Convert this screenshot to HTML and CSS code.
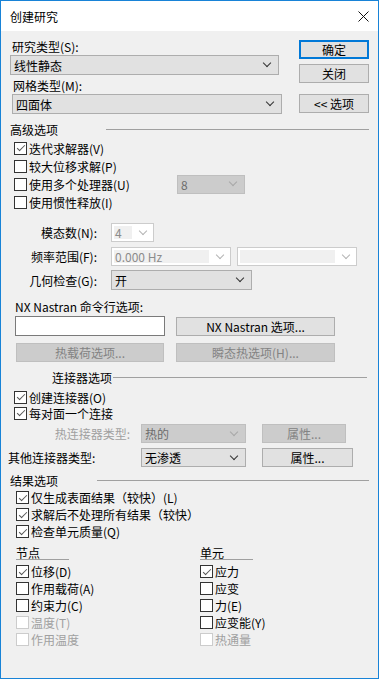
FILE: index.html
```html
<!DOCTYPE html>
<html lang="zh-CN">
<head>
    <meta charset="UTF-8">
    <meta name="viewport" content="width=device-width, initial-scale=1.0">
    <title>创建研究</title>
    <link rel="stylesheet" href="styles.css">
</head>
<body>
<div class="window">
    <div class="titlebar">
        <span class="title">创建研究</span>
        <svg class="close" width="11" height="11" viewBox="0 0 11 11">
            <path d="M0.5 0.5 L10.5 10.5 M10.5 0.5 L0.5 10.5" stroke="#111" stroke-width="1" fill="none"/>
        </svg>
    </div>

    <!-- study type / mesh type + dialog buttons -->
    <div class="top">
        <div class="top-left">
            <div class="label lbl-study">研究类型(S):</div>
            <div class="combo combo-study"><span>线性静态</span></div>
            <div class="label lbl-mesh">网格类型(M):</div>
            <div class="combo combo-mesh"><span>四面体</span></div>
        </div>
        <div class="top-buttons">
            <div class="btn btn-default">确定</div>
            <div class="btn btn-close">关闭</div>
            <div class="btn btn-options">&lt;&lt; 选项</div>
        </div>
    </div>

    <!-- advanced options -->
    <div class="group-head head-adv">
        <span class="caption">高级选项</span>
        <span class="rule"></span>
    </div>
    <div class="checks checks-adv">
        <div class="check"><span class="box on"></span>迭代求解器(V)</div>
        <div class="check"><span class="box"></span>较大位移求解(P)</div>
        <div class="check">
            <span class="box"></span><span class="proc-text">使用多个处理器(U)</span>
            <div class="combo dis combo-proc"><span>8</span></div>
        </div>
        <div class="check"><span class="box"></span>使用惯性释放(I)</div>
    </div>

    <div class="fields">
        <div class="field">
            <span class="field-label">模态数(N):</span>
            <div class="combo edit combo-modes"><span>4</span></div>
        </div>
        <div class="field field-freq">
            <span class="field-label">频率范围(F):</span>
            <div class="combo edit combo-freq"><span>0.000 Hz</span></div>
            <div class="combo edit combo-freq combo-freq2"><span></span></div>
        </div>
        <div class="field field-geo">
            <span class="field-label">几何检查(G):</span>
            <div class="combo combo-geo"><span>开</span></div>
        </div>
    </div>

    <!-- NX Nastran -->
    <div class="nx">
        <div class="label">NX Nastran 命令行选项:</div>
        <div class="nx-row">
            <div class="textbox"></div>
            <div class="btn btn-nx">NX Nastran 选项...</div>
        </div>
        <div class="nx-row nx-row2">
            <div class="btn dis btn-heat">热载荷选项...</div>
            <div class="btn dis btn-nx">瞬态热选项(H)...</div>
        </div>
    </div>

    <!-- connectors -->
    <div class="group-head head-conn">
        <span class="caption">连接器选项</span>
        <span class="rule"></span>
    </div>
    <div class="checks checks-conn">
        <div class="check"><span class="box on"></span>创建连接器(O)</div>
        <div class="check"><span class="box on"></span>每对面一个连接</div>
    </div>
    <div class="conn-row conn-heat">
        <span class="conn-label dis-text">热连接器类型:</span>
        <div class="combo dis combo-conn"><span>热的</span></div>
        <div class="btn dis btn-prop-dis">属性...</div>
    </div>
    <div class="conn-row conn-other">
        <span class="conn-label">其他连接器类型:</span>
        <div class="combo combo-conn"><span>无渗透</span></div>
        <div class="btn btn-prop">属性...</div>
    </div>

    <!-- results -->
    <div class="group-head head-res">
        <span class="caption">结果选项</span>
        <span class="rule"></span>
    </div>
    <div class="checks checks-res">
        <div class="check"><span class="box on"></span>仅生成表面结果（较快）(L)</div>
        <div class="check"><span class="box on"></span>求解后不处理所有结果（较快）</div>
        <div class="check"><span class="box on"></span>检查单元质量(Q)</div>
    </div>

    <div class="cols">
        <div class="col col-node">
            <div class="col-head">节点</div>
            <div class="col-checks">
                <div class="check"><span class="box on"></span>位移(D)</div>
                <div class="check"><span class="box"></span>作用载荷(A)</div>
                <div class="check"><span class="box"></span>约束力(C)</div>
                <div class="check dis-text"><span class="box dis"></span>温度(T)</div>
                <div class="check dis-text"><span class="box dis"></span>作用温度</div>
            </div>
        </div>
        <div class="col">
            <div class="col-head">单元</div>
            <div class="col-checks">
                <div class="check"><span class="box on"></span>应力</div>
                <div class="check"><span class="box"></span>应变</div>
                <div class="check"><span class="box"></span>力(E)</div>
                <div class="check"><span class="box"></span>应变能(Y)</div>
                <div class="check dis-text"><span class="box dis"></span>热通量</div>
            </div>
        </div>
    </div>
</div>
</body>
</html>
```

FILE: styles.css
```css
* {
    box-sizing: border-box;
}
body {
    margin: 0;
    font-family: "Noto Sans CJK SC", "Noto Sans", sans-serif;
    font-size: 12px;
    color: #000;
}
.window {
    width: 379px;
    height: 679px;
    border: 1px solid #1883d7;
    background-color: #f0f0f0;
}
.titlebar {
    height: 30px;
    background-color: #fff;
    display: flex;
    align-items: center;
    justify-content: space-between;
    padding: 0 9px;
}
.label {
    height: 14px;
    line-height: 14px;
    white-space: nowrap;
}

/* combo boxes */
.combo {
    display: flex;
    align-items: center;
    height: 20px;
    background-color: #e1e1e1;
    border: 1px solid #adadad;
    padding-left: 3px;
    white-space: nowrap;
}
.combo span {
    flex: 1;
}
.combo::after {
    content: "";
    width: 5px;
    height: 5px;
    border-right: 1px solid #333;
    border-bottom: 1px solid #333;
    transform: translateY(-2px) rotate(45deg);
    margin-right: 8px;
}
.combo.dis {
    background-color: #cccccc;
    border-color: #bfbfbf;
    color: #6d6d6d;
    height: 19px;
}
.combo.dis::after {
    border-color: #a8a8a8;
}
.combo.edit {
    background-color: #fff;
    border-color: #cccccc;
    padding: 2px 0 2px 2px;
    color: #8c8c8c;
    height: 19px;
}
.combo.edit span {
    height: 100%;
    line-height: 13px;
    background-color: #f0f0f0;
    padding-left: 1px;
}
.combo.edit::after {
    border-color: #b4b4b4;
    margin: 0 7px 0 8px;
}

/* buttons */
.btn {
    height: 19px;
    display: flex;
    align-items: center;
    justify-content: center;
    background-color: #e1e1e1;
    border: 1px solid #adadad;
    white-space: nowrap;
}
.btn.dis {
    background-color: #cccccc;
    border-color: #bfbfbf;
    color: #838383;
}
.btn-default {
    border: 2px solid #0078d7;
}

.top {
    display: flex;
    justify-content: space-between;
    padding: 9px 9px 0 9px;
}
.top-left {
    width: 272px;
}
.lbl-study {
    padding-left: 2px;
}
.combo-study {
    margin-top: 1px;
    width: 269px;
}
.lbl-mesh {
    margin-top: 4px;
    padding-left: 3px;
}
.combo-mesh {
    margin-top: 1px;
    margin-left: 2px;
    width: 270px;
}
.top-buttons {
    width: 70px;
}
.btn-close {
    margin-top: 5px;
}
.btn-options {
    margin-top: 11px;
}

/* group headings */
.group-head {
    display: flex;
    align-items: center;
    height: 14px;
    white-space: nowrap;
}
.group-head .rule {
    flex: 1;
    border-top: 1px solid #a0a0a0;
}
.head-adv {
    margin-top: 8px;
    padding: 0 9px;
}
.head-adv .caption {
    width: 96px;
}
.head-conn {
    margin-top: 8px;
    padding: 0 11px 0 51px;
}
.head-conn .rule {
    margin-left: 1px;
}
.head-res {
    margin-top: 6px;
    padding: 0 9px;
}
.head-res .caption {
    width: 87px;
}

/* check boxes */
.checks {
    padding-left: 13px;
}
.check {
    display: flex;
    align-items: center;
    height: 18px;
    white-space: nowrap;
}
.box {
    flex: none;
    width: 13px;
    height: 13px;
    border: 1px solid #333;
    background-color: #fff;
    margin-right: 2px;
    display: flex;
    align-items: center;
    justify-content: center;
}
.box.on::after {
    content: "";
    width: 3px;
    height: 7px;
    border-right: 1px solid #555;
    border-bottom: 1px solid #555;
    transform: translateY(-1px) rotate(45deg);
}
.box.dis {
    border-color: #cccccc;
}
.dis-text {
    color: #a0a0a0;
}
.checks-adv {
    margin-top: 3px;
}
.proc-text {
    width: 148px;
}
.combo-proc {
    width: 68px;
}

/* mode / frequency / geometry fields */
.fields {
    margin-top: 12px;
}
.field {
    display: flex;
    align-items: center;
}
.field-label {
    width: 96px;
    margin-right: 14px;
    text-align: right;
    white-space: nowrap;
}
.combo-modes {
    width: 43px;
}
.field-freq {
    margin-top: 5px;
}
.combo-freq {
    width: 120px;
}
.combo-freq2 {
    margin-left: 6px;
}
.field-geo {
    margin-top: 4px;
}
.combo-geo {
    width: 141px;
}

/* nastran */
.nx {
    padding-left: 14px;
    margin-top: 10px;
}
.nx-row {
    display: flex;
    align-items: center;
    margin-top: 2px;
}
.textbox {
    width: 150px;
    height: 20px;
    background-color: #fff;
    border: 1px solid #7a7a7a;
}
.btn-nx {
    width: 159px;
    margin-left: 11px;
}
.nx-row2 {
    margin-top: 7px;
}
.btn-heat {
    width: 148px;
    margin-left: 1px;
}
.nx-row2 .btn-nx {
    margin-left: 12px;
}

/* connectors */
.checks-conn {
    margin-top: 5px;
}
.checks-conn .check {
    height: 16px;
}
.conn-row {
    display: flex;
    align-items: center;
}
.conn-label {
    width: 129px;
    margin-right: 11px;
    white-space: nowrap;
}
.conn-heat {
    margin-top: 3px;
}
.conn-heat .conn-label {
    text-align: right;
}
.conn-other {
    margin-top: 5px;
}
.conn-other .conn-label {
    padding-left: 7px;
}
.combo-conn {
    width: 105px;
    height: 19px;
}
.btn-prop-dis {
    width: 84px;
    margin-left: 16px;
}
.btn-prop {
    width: 91px;
    margin-left: 16px;
}

/* results */
.checks-res {
    margin-top: 2px;
    padding-left: 15px;
}
.checks-res .check {
    height: 17px;
}
.cols {
    display: flex;
    padding-left: 15px;
    margin-top: 6px;
}
.col-node {
    width: 184px;
}
.col-head {
    width: 53px;
    height: 14px;
    line-height: 13px;
    border-bottom: 1px solid #a0a0a0;
}
.col-checks {
    margin-top: 3px;
}
.col-checks .check {
    height: 17px;
}
```
